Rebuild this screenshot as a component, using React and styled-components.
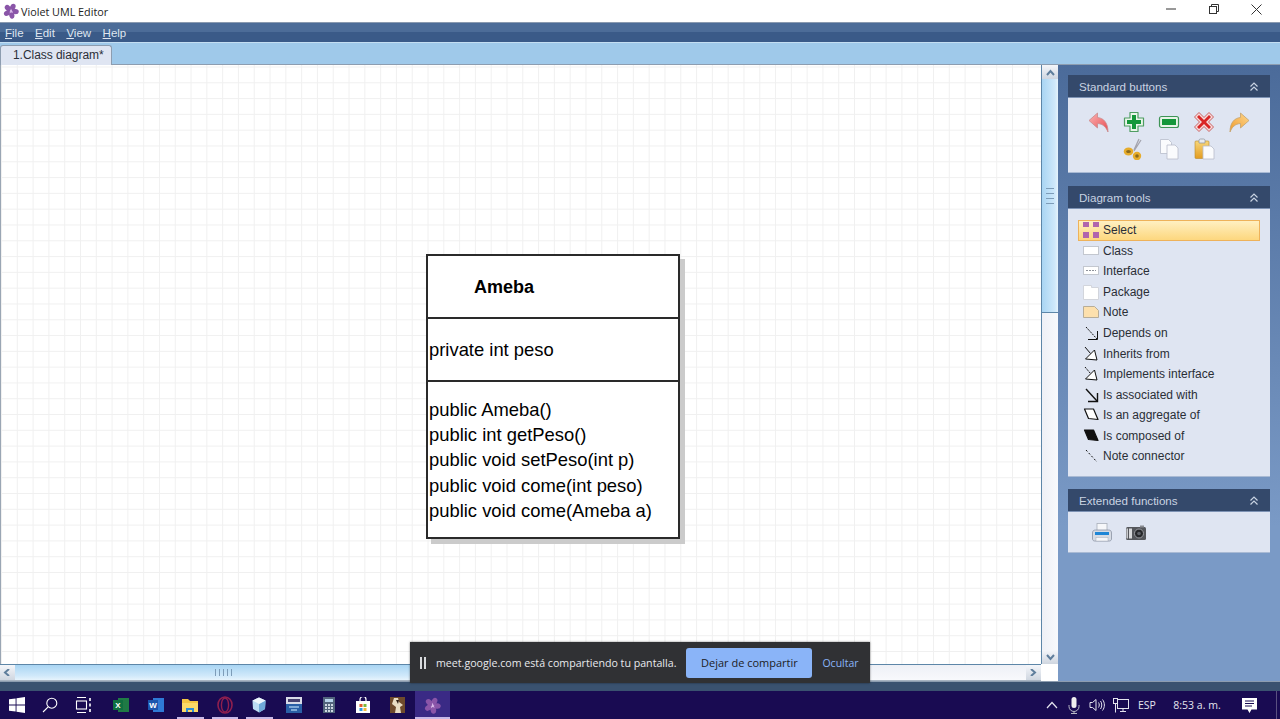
import React from 'react'
import styled, { createGlobalStyle } from 'styled-components'

const Global = createGlobalStyle`
  html, body { margin:0; padding:0; width:1280px; height:719px; overflow:hidden; background:#fff; }
  body { font-family:"Liberation Sans", Arial, sans-serif; }
`

const Page = styled.div`
  position:relative;
  width:1280px;
  height:719px;
  display:flex;
  flex-direction:column;
  overflow:hidden;
`

// window chrome
const TitleBar = styled.div`
  height:22px;
  flex:none;
  display:flex;
  align-items:center;
  background:#fff;
  padding-left:3px;
  font-family:"Open Sans", "Noto Sans", sans-serif;
  font-size:10.8px;
  color:#222;
`
const TitleText = styled.span`
  margin-left:2px;
  padding-top:1px;
`
const WinButtons = styled.div`
  margin-left:auto;
  margin-right:2px;
  margin-bottom:4px;
  display:flex;
`
const WinButton = styled.div`
  width:43px;
  height:18px;
  display:flex;
  align-items:center;
  justify-content:center;
`
const MenuBar = styled.div`
  height:20px;
  flex:none;
  display:flex;
  align-items:center;
  gap:11.5px;
  padding-left:5px;
  background:linear-gradient(#4c6c98 0%, #4c6c98 45%, #3a5a88 50%, #3a5a88 100%);
  border-top:1px solid #8a9ab0;
  box-sizing:border-box;
  color:#dfe6f0;
  font-size:11.5px;
  u { text-underline-offset:1px; }
`
const TabStrip = styled.div`
  height:23px;
  flex:none;
  display:flex;
  align-items:flex-end;
  background:#9fc9ea;
  border-top:1px solid #c4def2;
  border-bottom:1px solid #8d9db0;
  box-sizing:border-box;
`
const Tab = styled.div`
  width:112px;
  height:20px;
  box-sizing:border-box;
  margin-bottom:-1px;
  padding:2px 0 0 12px;
  background:#dfe5f2;
  border:1px solid #8d9db0;
  border-bottom:none;
  border-radius:3px 3px 0 0;
  font-size:12px;
  color:#2b2f38;
  letter-spacing:-.05px;
`
const Main = styled.div`
  flex:1;
  display:flex;
  min-height:0;
`
const DrawArea = styled.div`
  width:1058px;
  flex:none;
  display:grid;
  grid-template-columns:1041px 17px;
  grid-template-rows:1fr 17px;
  background:#fff;
`

// diagram canvas
const Canvas = styled.div`
  position:relative;
  box-sizing:border-box;
  border-left:1px solid #9aa6b4;
  background-color:#fff;
  background-image:
    linear-gradient(to right, #f0f0f0 1px, transparent 1px),
    linear-gradient(to bottom, #f0f0f0 1px, transparent 1px);
  background-size:15.8px 15.8px;
  background-position:0px 1.5px;
`
const ClassBox = styled.div`
  position:absolute;
  left:425px;
  top:189px;
  width:254px;
  height:285px;
  box-sizing:border-box;
  border:2px solid #2a2a2a;
  background:#fff;
  box-shadow:5px 5px 0 #cbcbcb;
  display:grid;
  grid-template-rows:61px 2px 61px 2px 1fr;
  font-size:18.4px;
  color:#000;
`
const ClassName = styled.div`
  font-size:18px;
  font-weight:bold;
  padding:1px 0 0 46px;
  display:flex;
  align-items:center;
`
const Divider = styled.div`
  background:#2a2a2a;
`
const Attr = styled.div`
  padding-left:1px;
  display:flex;
  align-items:center;
`
const Methods = styled.div`
  padding:15px 0 0 1px;
  line-height:25.2px;
  white-space:nowrap;
`

// scrollbars
const VScroll = styled.div`
  display:flex;
  flex-direction:column;
  border-left:1px solid #5d86a8;
  box-sizing:border-box;
  background:#fff;
`
const ScrollBtn = styled.div`
  flex:none;
  display:flex;
  align-items:center;
  justify-content:center;
  background:linear-gradient(#f4f6fa, #cfd6e0);
  width:${p => p.$w || '100%'};
  height:${p => p.$h || '100%'};
`
const VThumb = styled.div`
  height:233px;
  flex:none;
  display:flex;
  flex-direction:column;
  align-items:center;
  justify-content:center;
  gap:4px;
  background:linear-gradient(to right, #a9d5f3, #cfe8fa 80%, #e6f3fc);
  border-bottom:1px solid #5d86a8;
`
const VTrack = styled.div`
  flex:1;
  background:linear-gradient(to right, #eef0f6, #f8f9fc);
`
const GripV = styled.i`
  display:block;
  width:8px;
  height:1px;
  background:#7d9cb8;
`
const GripH = styled.i`
  display:block;
  width:1px;
  height:7px;
  background:#7d9cb8;
`
const HScroll = styled.div`
  display:flex;
  border-top:1px solid #5d86a8;
  border-bottom:1px solid #a8b4c2;
  box-sizing:border-box;
`
const HThumb = styled.div`
  width:417px;
  flex:none;
  display:flex;
  align-items:center;
  justify-content:center;
  gap:3px;
  background:linear-gradient(#a9d5f3, #cfe8fa 70%, #e6f3fc);
`
const HTrack = styled.div`
  flex:1;
  background:linear-gradient(#eef0f6, #f8f9fc);
`
const Corner = styled.div`
  background:#fff;
`

// right panel
const SidePanel = styled.div`
  flex:1;
  box-sizing:border-box;
  padding:10px 10px 0;
  background:linear-gradient(#4b6b9a, #7a9ac6 75%);
  display:flex;
  flex-direction:column;
`
const Section = styled.section`
  margin-bottom:${p => p.$mb}px;
`
const SectionHead = styled.div`
  height:23px;
  display:flex;
  align-items:center;
  justify-content:space-between;
  padding:1px 11px 0 11px;
  box-sizing:border-box;
  background:#34496b;
  border-bottom:1px solid #7d92b4;
  color:#c9d3e2;
  font-size:11.6px;
`
const SectionBody = styled.div`
  background:#dfe5f2;
  height:${p => p.$h}px;
  box-sizing:border-box;
  border-bottom:1px solid #a9bad4;
`
const ButtonsBody = styled(SectionBody)`
  padding-top:13px;
  display:flex;
  flex-direction:column;
  align-items:center;
  gap:5px;
`
const ButtonRow = styled.div`
  display:flex;
  gap:${p => p.$gap}px;
  margin-left:${p => p.$ml || 0}px;
`
const ToolList = styled(SectionBody)`
  padding:11px 10px 0;
`
const ToolRow = styled.div`
  height:20.55px;
  box-sizing:border-box;
  display:flex;
  align-items:center;
  gap:4px;
  padding-left:5px;
  font-size:12px;
  color:#2a2e36;
  ${p => p.$active && `
    padding-left:4px;
    border:1px solid #eeb25a;
    background:linear-gradient(#fff0c2, #fdd77e);
  `}
`
const ToolIcon = styled.span`
  width:16px;
  height:16px;
  flex:none;
  display:flex;
  align-items:center;
  justify-content:center;
`
const ExtraBody = styled(SectionBody)`
  display:flex;
  gap:12px;
  padding:10px 0 0 23px;
`
const StatusStrip = styled.div`
  height:10px;
  flex:none;
  background:#3a5270;
  border-top:1px solid #8d9db0;
  box-sizing:border-box;
`

// taskbar
const Taskbar = styled.div`
  height:28px;
  flex:none;
  display:flex;
  align-items:center;
  background:#190b52;
  color:#e4e4ee;
`
const StartGroup = styled.div`
  display:flex;
  margin-right:3px;
`
const TaskSlot = styled.div`
  width:${p => p.$w || 34.6}px;
  height:28px;
  flex:none;
  box-sizing:border-box;
  display:flex;
  align-items:center;
  justify-content:center;
  position:relative;
  background:${p => p.$active ? '#3a2a85' : 'transparent'};
  ${p => (p.$open || p.$active) && `
    &::after {
      content:"";
      position:absolute;
      bottom:0;
      height:2px;
      left:${p.$active ? 0 : 4}px;
      right:${p.$active ? 0 : 4}px;
      background:#c7b8e8;
    }
  `}
`
const Tray = styled.div`
  margin-left:auto;
  display:flex;
  align-items:center;
  font-family:"Open Sans", "Noto Sans", sans-serif;
  font-size:10.5px;
  height:100%;
`
const TrayItem = styled.div`
  width:${p => p.$w}px;
  flex:none;
  display:flex;
  align-items:center;
  justify-content:center;
  height:100%;
`
const ShowDesktop = styled.div`
  width:1px;
  height:28px;
  margin:0 3px 0 12px;
  background:#5a5080;
`

// screen share banner
const ShareBar = styled.div`
  position:absolute;
  left:410px;
  top:642px;
  width:460px;
  height:41px;
  box-sizing:border-box;
  display:flex;
  align-items:center;
  padding-left:10px;
  background:#303134;
  box-shadow:0 0 2px rgba(0,0,0,.5);
  font-family:"Open Sans", "Noto Sans", sans-serif;
  font-size:10.65px;
  color:#e8eaed;
  white-space:nowrap;
`
const Pause = styled.span`
  width:6px;
  height:12px;
  flex:none;
  border-left:2px solid #d8dadd;
  border-right:2px solid #d8dadd;
  box-sizing:border-box;
  margin-right:10px;
`
const StopButton = styled.div`
  margin-left:10px;
  width:126px;
  height:30px;
  flex:none;
  display:flex;
  align-items:center;
  justify-content:center;
  background:#8ab4f8;
  border-radius:3px;
  font-size:11px;
  color:#202124;
`
const HideLink = styled.span`
  margin-left:10px;
  font-size:10.5px;
  color:#8ab4f8;
`

const Chevrons = () => (
  <svg width="10" height="10" viewBox="0 0 10 10" fill="none" stroke="#c9d3e2" strokeWidth="1.2">
    <path d="M1.5 4.5 5 1l3.5 3.5M1.5 8.5 5 5l3.5 3.5" />
  </svg>
)

const Arrow = ({ d }) => (
  <svg width="9" height="7" viewBox="0 0 9 7" fill="none" stroke="#5f7e9c" strokeWidth="2">
    <path d={d} />
  </svg>
)

const Flower = ({ size = 16 }) => (
  <svg width={size} height={size} viewBox="0 0 16 16">
    <g fill="#8a55a8">
      <ellipse cx="8" cy="3.8" rx="2.6" ry="3.6" transform="rotate(25 8 8)" />
      <ellipse cx="8" cy="3.8" rx="2.6" ry="3.6" transform="rotate(97 8 8)" />
      <ellipse cx="8" cy="3.8" rx="2.6" ry="3.6" transform="rotate(169 8 8)" />
      <ellipse cx="8" cy="3.8" rx="2.6" ry="3.6" transform="rotate(241 8 8)" />
      <ellipse cx="8" cy="3.8" rx="2.6" ry="3.6" transform="rotate(313 8 8)" />
    </g>
    <path d="M8 5.5 10 10 6 8.5 10 8 6.5 10.5z" fill="#d9b8e8" />
  </svg>
)

// toolbar icons
const UndoIcon = () => (
  <svg width="22" height="22" viewBox="0 0 22 22">
    <defs>
      <linearGradient id="undoFill" x1="0" y1="0" x2="1" y2="1">
        <stop offset="0" stopColor="#fbb5b5" />
        <stop offset="1" stopColor="#e8494f" />
      </linearGradient>
    </defs>
    <path d="M1 9.5 9.500 2v4.500c6 .5 10.500 5 10.500 14.500-2-5-5-8-10.500-8.500v4.500z" fill="url(#undoFill)" stroke="#c98a8c" strokeWidth=".8" />
  </svg>
)
const RedoIcon = () => (
  <svg width="22" height="22" viewBox="0 0 22 22">
    <defs>
      <linearGradient id="redoFill" x1="1" y1="0" x2="0" y2="1">
        <stop offset="0" stopColor="#ffd78e" />
        <stop offset="1" stopColor="#ee9a2a" />
      </linearGradient>
    </defs>
    <path d="M21 9.5 12.500 2v4.500C6.500 7 2 11.500 2 21c2-5 5-8 10.500-8.500v4.500z" fill="url(#redoFill)" stroke="#c4a26c" strokeWidth=".8" />
  </svg>
)
const PlusIcon = () => (
  <svg width="22" height="22" viewBox="0 0 22 22">
    <path d="M7 1.5h8v5.500h5.500v8H15v5.500H7V15H1.500V7H7z" fill="#eaf5ea" stroke="#4f9d63" strokeWidth="1.2" strokeLinejoin="round" />
    <path d="M9 4h4v5h5v4h-5v5H9v-5H4V9h5z" fill="#14973a" />
  </svg>
)
const MinusIcon = () => (
  <svg width="22" height="22" viewBox="0 0 22 22">
    <rect x="1.500" y="5.500" width="19" height="11" rx="2" fill="#e8f4e8" stroke="#3f9457" strokeWidth="1.2" />
    <rect x="4" y="8" width="14" height="6" fill="#14973a" />
  </svg>
)
const DeleteIcon = () => (
  <svg width="22" height="22" viewBox="0 0 22 22">
    <path d="M1.500 6 6 1.500l5 5 5-5L20.500 6l-5 5 5 5-4.500 4.500-5-5-5 5L1.500 16l5-5z" fill="#f6dcdc" stroke="#c65050" strokeWidth=".9" strokeLinejoin="round" />
    <path d="M4 6 6 4l5 5 5-5 2 2-5 5 5 5-2 2-5-5-5 5-2-2 5-5z" fill="#d92525" />
  </svg>
)
const CutIcon = () => (
  <svg width="22" height="22" viewBox="0 0 22 22">
    <path d="M16 1 11 12M18 2l-7 11" stroke="#a4a4ae" strokeWidth="1.3" fill="none" />
    <ellipse cx="5.500" cy="13.500" rx="3.600" ry="2.800" fill="#8a6a1e" stroke="#e6ac2c" strokeWidth="2.4" />
    <ellipse cx="14" cy="18" rx="3" ry="3" fill="#8a6a1e" stroke="#e6ac2c" strokeWidth="2.4" />
  </svg>
)
const Sheet = ({ x, y, w = 10, h = 13 }) => (
  <path
    d={`M${x} ${y}h${w - 3}l3 3v${h - 3}h-${w}z`}
    fill="#fafbfd"
    stroke="#b8bdca"
    strokeWidth=".8"
  />
)
const CopyIcon = () => (
  <svg width="22" height="22" viewBox="0 0 22 22">
    <Sheet x={2.5} y={1.5} w={11} h={14} />
    <Sheet x={9} y={7} w={11} h={14} />
  </svg>
)
const PasteIcon = () => (
  <svg width="22" height="22" viewBox="0 0 22 22">
    <defs>
      <linearGradient id="board" x1="0" y1="0" x2="0" y2="1">
        <stop offset="0" stopColor="#f7d67a" />
        <stop offset="1" stopColor="#e39c20" />
      </linearGradient>
    </defs>
    <rect x="2" y="3" width="14" height="17.5" rx="1" fill="url(#board)" stroke="#b8892a" strokeWidth=".6" />
    <path d="M6 5V2.500a1.500 1.500 0 0 1 1.500-1.500h3A1.500 1.500 0 0 1 12 2.500V5z" fill="#e8ebf0" stroke="#8a8f99" strokeWidth=".7" />
    <Sheet x={10} y={8} w={11} h={13} />
  </svg>
)
const PrintIcon = () => (
  <svg width="22" height="22" viewBox="0 0 22 22">
    <rect x="6" y="1.5" width="10" height="8" fill="#f6f7fa" stroke="#a9afba" strokeWidth=".8" />
    <path d="M1.500 11c0-2 1-3 3-3h13c2 0 3 1 3 3v6c0 1-1 2-2 2h-15c-1 0-2-1-2-2z" fill="#d6dbe4" stroke="#8a93a3" strokeWidth=".8" />
    <rect x="4" y="10" width="14" height="3" fill="#1f86d6" />
    <rect x="5" y="15.5" width="12" height="3.5" fill="#f6f7fa" stroke="#a9afba" strokeWidth=".5" />
  </svg>
)
const CameraIcon = () => (
  <svg width="22" height="22" viewBox="0 0 22 22">
    <rect x="1" y="5" width="20" height="13" rx="1.5" fill="#55575c" />
    <rect x="4" y="6.5" width="3" height="10" fill="#d8d9dc" />
    <rect x="1.5" y="6.5" width="1.4" height="10" fill="#d8d9dc" />
    <circle cx="14" cy="11.5" r="4.5" fill="#26272a" stroke="#9a9ca2" strokeWidth="1" />
    <circle cx="14" cy="11.5" r="1.8" fill="#60636a" />
    <rect x="15" y="3.5" width="4" height="2" fill="#8a8c91" />
  </svg>
)

// tool list icons
const SelectIcon = () => (
  <svg width="16" height="16" viewBox="0 0 16 16" fill="#b065ad">
    <rect x="0" y="0" width="6" height="5" />
    <rect x="10" y="0" width="6" height="5" />
    <rect x="0" y="10" width="6" height="6" />
    <rect x="10" y="10" width="6" height="6" />
  </svg>
)
const ClassIcon = () => (
  <svg width="16" height="16" viewBox="0 0 16 16">
    <rect x=".5" y="3.5" width="15" height="8" fill="#fff" stroke="#c3c7cf" />
  </svg>
)
const InterfaceIcon = () => (
  <svg width="16" height="16" viewBox="0 0 16 16">
    <rect x=".5" y="3.5" width="15" height="8" fill="#fff" stroke="#c3c7cf" />
    <path d="M3 7.5h10" stroke="#8f939b" strokeDasharray="2 1" />
  </svg>
)
const PackageIcon = () => (
  <svg width="16" height="16" viewBox="0 0 16 16">
    <path d="M.5 1.5h8v2h7v12H.5z" fill="#fff" stroke="#d2d5dc" />
  </svg>
)
const NoteIcon = () => (
  <svg width="16" height="16" viewBox="0 0 16 16">
    <path d="M.5 2.5h11l4 4v7H.5z" fill="#fde0ad" stroke="#b7ad99" />
  </svg>
)
const EdgeIcon = ({ head, dash, w = 1 }) => (
  <svg width="16" height="16" viewBox="0 0 16 16" fill="none" stroke="#111" strokeWidth={w}>
    {head === 'tri' ? (
      <>
        <path d="M2 1 7.500 7.500" strokeDasharray={dash} />
        <path d="M14 14 2.500 13 11.500 4z" fill="#fff" />
      </>
    ) : (
      <path d="M3 2 14 14" strokeDasharray={dash} />
    )}
    {head === 'open' && <path d="M5 14.500h9.500V6" />}
  </svg>
)
const DiamondIcon = ({ fill }) => (
  <svg width="16" height="16" viewBox="0 0 16 16">
    <path d="M1.500 2h9l4.500 10.500-9.500-1z" fill={fill} stroke="#111" strokeWidth="1.2" strokeLinejoin="round" />
  </svg>
)

// taskbar icons
const WindowsLogo = () => (
  <svg width="16" height="16" viewBox="0 0 16 16" fill="#fff">
    <path d="M0 2.300 6.600 1.400V7.600H0zM7.500 1.300 16 0v7.600H7.500zM0 8.400h6.600v6.200L0 13.700zM7.500 8.400H16V16L7.500 14.800z" />
  </svg>
)
const SearchGlyph = () => (
  <svg width="16" height="16" viewBox="0 0 16 16" fill="none" stroke="#fff" strokeWidth="1.1">
    <circle cx="9.800" cy="6.200" r="5" />
    <path d="M6.200 9.800 1 15" />
  </svg>
)
const TaskViewGlyph = () => (
  <svg width="17" height="16" viewBox="0 0 17 16" fill="none" stroke="#fff" strokeWidth="1.1">
    <path d="M2 .5h9M2 15.500h9" />
    <rect x="1.5" y="4" width="10" height="8" />
    <path d="M15 1v3M15 6.500v3M15 12v3" strokeWidth="1.6" />
  </svg>
)
const ExcelGlyph = () => (
  <svg width="16" height="16" viewBox="0 0 16 16">
    <rect x="5" y="1" width="11" height="14" fill="#1f7a45" />
    <rect x="0" y="3" width="10" height="10" fill="#107040" />
    <text x="5" y="11" textAnchor="middle" fontSize="8" fontWeight="bold" fill="#fff" fontFamily="Liberation Sans">X</text>
  </svg>
)
const WordGlyph = () => (
  <svg width="16" height="16" viewBox="0 0 16 16">
    <rect x="5" y="1" width="11" height="14" fill="#2f7ad6" />
    <rect x="0" y="3" width="10" height="10" fill="#1b56ad" />
    <text x="5" y="11" textAnchor="middle" fontSize="8" fontWeight="bold" fill="#fff" fontFamily="Liberation Sans">W</text>
  </svg>
)
const FolderGlyph = () => (
  <svg width="16" height="16" viewBox="0 0 16 16">
    <path d="M0 2h6l2 2h8v11H0z" fill="#f4c543" />
    <rect x="0" y="6" width="16" height="9" fill="#fbd968" />
    <path d="M4 15v-4h8v4h-2v-2H6v2z" fill="#2d8fd6" />
  </svg>
)
const OperaGlyph = () => (
  <svg width="16" height="18" viewBox="0 0 16 18" fill="none" stroke="#8f1f4e">
    <ellipse cx="8" cy="9" rx="7" ry="8" strokeWidth="1.6" />
    <ellipse cx="8" cy="9" rx="3.6" ry="7" strokeWidth="1.4" />
  </svg>
)
const CubeGlyph = () => (
  <svg width="16" height="16" viewBox="0 0 16 16">
    <path d="M8 .5 14.500 3.500 14 12 8 15.500 2 12 1.500 3.500z" fill="#bcdcf4" />
    <path d="M8 7 14.500 3.500 14 12 8 15.500z" fill="#6fa9d8" />
    <path d="M8 .5 14.500 3.500 8 7 1.500 3.500z" fill="#eef6fc" />
  </svg>
)
const DevGlyph = () => (
  <svg width="16" height="16" viewBox="0 0 16 16">
    <rect x="0" y="0" width="16" height="16" fill="#2a5fa6" />
    <rect x="0" y="0" width="16" height="7" fill="#d9dbe8" />
    <rect x="2" y="2" width="12" height="3" fill="#46406f" />
    <path d="M3 10h10M5 13h6" stroke="#9cc2e8" strokeWidth="1.4" />
  </svg>
)
const CalcGlyph = () => (
  <svg width="14" height="16" viewBox="0 0 14 16">
    <rect x="1" y="0" width="12" height="16" fill="#52647c" />
    <rect x="3" y="2" width="8" height="3" fill="#b7d3ea" />
    <path d="M3 7h2v2H3zM6 7h2v2H6zM9 7h2v2H9zM3 10h2v2H3zM6 10h2v2H6zM9 10h2v2H9zM3 13h2v2H3zM6 13h2v2H6zM9 13h2v2H9z" fill="#cfd8e2" />
  </svg>
)
const StoreGlyph = () => (
  <svg width="16" height="16" viewBox="0 0 16 16">
    <path d="M5 4V2.500a3 3 0 0 1 6 0V4" stroke="#fff" fill="none" strokeWidth="1.2" />
    <rect x="1" y="4" width="14" height="12" fill="#fff" />
    <rect x="4.5" y="7" width="3" height="3" fill="#e25a2c" />
    <rect x="8.5" y="7" width="3" height="3" fill="#7cba3c" />
    <rect x="4.5" y="11" width="3" height="3" fill="#2f9ae0" />
    <rect x="8.5" y="11" width="3" height="3" fill="#f4b83a" />
  </svg>
)
const PhotoGlyph = () => (
  <svg width="15" height="16" viewBox="0 0 15 16">
    <rect width="15" height="16" fill="#6e4a2c" />
    <path d="M4 1h4l1 4 4 3-3 2 1 6H5l1-6-4-3z" fill="#e8dcc4" />
    <path d="M6 3h3l-1 4z" fill="#2a1a10" />
  </svg>
)

const ChevronUp = () => (
  <svg width="12" height="8" viewBox="0 0 12 8" fill="none" stroke="#e4e4ee" strokeWidth="1.2">
    <path d="M1 7 6 1.500 11 7" />
  </svg>
)
const MicGlyph = () => (
  <svg width="12" height="17" viewBox="0 0 12 17" fill="none">
    <rect x="3.5" y="0" width="5" height="11" rx="2.5" fill="#eee" />
    <path d="M1 8v1.500a5 5 0 0 0 10 0V8M6 14.500V17M3 16.500h6" stroke="#b9b9c6" strokeWidth="1" />
  </svg>
)
const VolumeGlyph = () => (
  <svg width="16" height="14" viewBox="0 0 16 14" fill="none" stroke="#e4e4ee" strokeWidth="1">
    <path d="M1 4.500h2.500L7 1.500v11l-3.500-3H1zM9.500 4.500c1 1.500 1 3.500 0 5M11.500 3c1.700 2.200 1.700 5.800 0 8M13.500 1.500c2.500 3.200 2.500 7.800 0 11" />
  </svg>
)
const NetworkGlyph = () => (
  <svg width="16" height="15" viewBox="0 0 16 15" fill="none" stroke="#e4e4ee" strokeWidth="1">
    <rect x="4.5" y="1.5" width="11" height="9" />
    <path d="M10 10.500v3M7 13.500h6" />
    <rect x=".5" y=".5" width="4" height="5" fill="#190b52" />
    <path d="M2.500 5.500v9" />
  </svg>
)
const NotifyGlyph = () => (
  <svg width="15" height="15" viewBox="0 0 15 15">
    <path d="M0 0h15v11.500H9.500L7.500 15l-2-3.500H0z" fill="#fff" />
    <path d="M3 3h9M3 5.500h9M3 8h7" stroke="#190b52" strokeWidth="1" />
  </svg>
)

const tools = [
  ['Class', <ClassIcon />],
  ['Interface', <InterfaceIcon />],
  ['Package', <PackageIcon />],
  ['Note', <NoteIcon />],
  ['Depends on', <EdgeIcon head="open" dash="2 1" />],
  ['Inherits from', <EdgeIcon head="tri" />],
  ['Implements interface', <EdgeIcon head="tri" dash="2 1" />],
  ['Is associated with', <EdgeIcon head="open" w={1.4} />],
  ['Is an aggregate of', <DiamondIcon fill="#fff" />],
  ['Is composed of', <DiamondIcon fill="#111" />],
  ['Note connector', <EdgeIcon dash="2 2" />],
]

const methods = [
  'public Ameba()',
  'public int getPeso()',
  'public void setPeso(int p)',
  'public void come(int peso)',
  'public void come(Ameba a)',
]

const taskIcons = [
  [<ExcelGlyph />],
  [<WordGlyph />],
  [<FolderGlyph />, 'open'],
  [<OperaGlyph />, 'open'],
  [<CubeGlyph />, 'open'],
  [<DevGlyph />],
  [<CalcGlyph />],
  [<StoreGlyph />],
  [<PhotoGlyph />],
  [<Flower size={17} />, 'active'],
]

export default function App() {
  return (
    <Page>
      <Global />
      <TitleBar>
        <Flower />
        <TitleText>Violet UML Editor</TitleText>
        <WinButtons>
          <WinButton>
            <svg width="10" height="10" viewBox="0 0 10 10"><path d="M0 5h10" stroke="#333" /></svg>
          </WinButton>
          <WinButton>
            <svg width="10" height="10" viewBox="0 0 10 10" fill="none" stroke="#333">
              <rect x=".5" y="2.5" width="7" height="7" />
              <path d="M2.500 2.500v-2h7v7h-2" />
            </svg>
          </WinButton>
          <WinButton>
            <svg width="11" height="11" viewBox="0 0 11 11" fill="none" stroke="#333"><path d="M.5.5l10 10M10.500.5l-10 10" /></svg>
          </WinButton>
        </WinButtons>
      </TitleBar>
      <MenuBar>
        <span><u>F</u>ile</span>
        <span><u>E</u>dit</span>
        <span><u>V</u>iew</span>
        <span><u>H</u>elp</span>
      </MenuBar>
      <TabStrip>
        <Tab>1.Class diagram*</Tab>
      </TabStrip>
      <Main>
        <DrawArea>
          <Canvas>
            <ClassBox>
              <ClassName>Ameba</ClassName>
              <Divider />
              <Attr>private int peso</Attr>
              <Divider />
              <Methods>
                {methods.map(m => <div key={m}>{m}</div>)}
              </Methods>
            </ClassBox>
          </Canvas>
          <VScroll>
            <ScrollBtn $h="14px"><Arrow d="M1 6 4.500 2 8 6" /></ScrollBtn>
            <VThumb>
              <GripV /><GripV /><GripV /><GripV />
            </VThumb>
            <VTrack />
            <ScrollBtn $h="14px"><Arrow d="M1 1 4.500 5 8 1" /></ScrollBtn>
          </VScroll>
          <HScroll>
            <ScrollBtn $w="15px"><Arrow d="M6 0 2 3.500 6 7" /></ScrollBtn>
            <HThumb>
              <GripH /><GripH /><GripH /><GripH /><GripH />
            </HThumb>
            <HTrack />
            <ScrollBtn $w="15px"><Arrow d="M2 0 6 3.500 2 7" /></ScrollBtn>
          </HScroll>
          <Corner />
        </DrawArea>
        <SidePanel>
          <Section $mb={13}>
            <SectionHead>Standard buttons <Chevrons /></SectionHead>
            <ButtonsBody $h={75}>
              <ButtonRow $gap={13}>
                <UndoIcon /><PlusIcon /><MinusIcon /><DeleteIcon /><RedoIcon />
              </ButtonRow>
              <ButtonRow $gap={13} $ml={-1}>
                <CutIcon /><CopyIcon /><PasteIcon />
              </ButtonRow>
            </ButtonsBody>
          </Section>
          <Section $mb={12}>
            <SectionHead>Diagram tools <Chevrons /></SectionHead>
            <ToolList $h={268}>
              <ToolRow $active>
                <ToolIcon><SelectIcon /></ToolIcon>Select
              </ToolRow>
              {tools.map(([label, icon]) => (
                <ToolRow key={label}>
                  <ToolIcon>{icon}</ToolIcon>{label}
                </ToolRow>
              ))}
            </ToolList>
          </Section>
          <Section $mb={0}>
            <SectionHead>Extended functions <Chevrons /></SectionHead>
            <ExtraBody $h={41}>
              <PrintIcon /><CameraIcon />
            </ExtraBody>
          </Section>
        </SidePanel>
      </Main>
      <StatusStrip />
      <Taskbar>
        <StartGroup>
          <TaskSlot $w={33.6}><WindowsLogo /></TaskSlot>
          <TaskSlot $w={33.6}><SearchGlyph /></TaskSlot>
          <TaskSlot $w={33.6}><TaskViewGlyph /></TaskSlot>
        </StartGroup>
        {taskIcons.map(([icon, state], i) => (
          <TaskSlot key={i} $open={state === 'open'} $active={state === 'active'}>{icon}</TaskSlot>
        ))}
        <Tray>
          <TrayItem $w={20}><ChevronUp /></TrayItem>
          <TrayItem $w={24}><MicGlyph /></TrayItem>
          <TrayItem $w={22}><VolumeGlyph /></TrayItem>
          <TrayItem $w={26}><NetworkGlyph /></TrayItem>
          <TrayItem $w={26}>ESP</TrayItem>
          <TrayItem $w={74}>8:53 a. m.</TrayItem>
          <TrayItem $w={30}><NotifyGlyph /></TrayItem>
          <ShowDesktop />
        </Tray>
      </Taskbar>
      <ShareBar>
        <Pause />
        meet.google.com está compartiendo tu pantalla.
        <StopButton>Dejar de compartir</StopButton>
        <HideLink>Ocultar</HideLink>
      </ShareBar>
    </Page>
  )
}
